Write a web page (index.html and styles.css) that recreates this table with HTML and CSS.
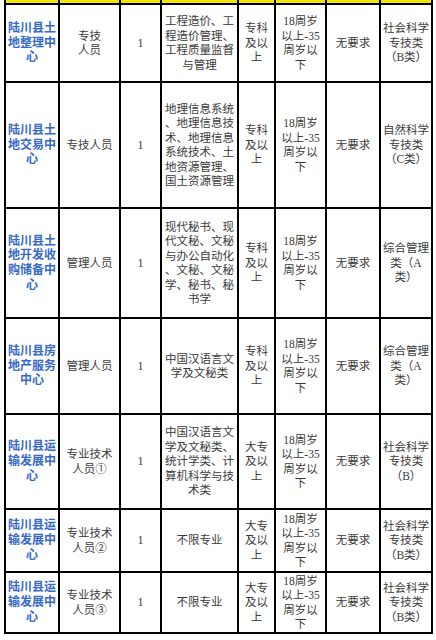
FILE: index.html
```html
<!DOCTYPE html>
<html lang="zh">
<head>
<meta charset="utf-8">
<link rel="stylesheet" href="styles.css">
</head>
<body>
<table class="jobs">
<colgroup>
<col class="c1"><col class="c2"><col class="c3"><col class="c4"><col class="c5"><col class="c6"><col class="c7"><col class="c8">
</colgroup>
<tr class="head"><td></td><td></td><td></td><td></td><td></td><td></td><td></td><td></td></tr>
<tr class="r1">
<td class="unit">陆川县土<br>地整理中<br>心</td>
<td>专技<br>人员</td>
<td class="num">1</td>
<td>工程造价、工<br>程造价管理、<br>工程质量监督<br>与管理</td>
<td>专科<br>及以<br>上</td>
<td class="age">18周岁<br>以上-35<br>周岁以<br>下</td>
<td>无要求</td>
<td>社会科学<br>专技类<br>（B类）</td>
</tr>
<tr class="r2">
<td class="unit">陆川县土<br>地交易中<br>心</td>
<td>专技人员</td>
<td class="num">1</td>
<td>地理信息系统<br>、地理信息技<br>术、地理信息<br>系统技术、土<br>地资源管理、<br>国土资源管理</td>
<td>专科<br>及以<br>上</td>
<td class="age">18周岁<br>以上-35<br>周岁以<br>下</td>
<td>无要求</td>
<td>自然科学<br>专技类<br>（C类）</td>
</tr>
<tr class="r3">
<td class="unit">陆川县土<br>地开发收<br>购储备中<br>心</td>
<td>管理人员</td>
<td class="num">1</td>
<td>现代秘书、现<br>代文秘、文秘<br>与办公自动化<br>、文秘、文秘<br>学、秘书、秘<br>书学</td>
<td>专科<br>及以<br>上</td>
<td class="age">18周岁<br>以上-35<br>周岁以<br>下</td>
<td>无要求</td>
<td>综合管理<br>类（A<br>类）</td>
</tr>
<tr class="r4">
<td class="unit">陆川县房<br>地产服务<br>中心</td>
<td>管理人员</td>
<td class="num">1</td>
<td>中国汉语言文<br>学及文秘类</td>
<td>专科<br>及以<br>上</td>
<td class="age">18周岁<br>以上-35<br>周岁以<br>下</td>
<td>无要求</td>
<td>综合管理<br>类（A<br>类）</td>
</tr>
<tr class="r5">
<td class="unit">陆川县运<br>输发展中<br>心</td>
<td>专业技术<br>人员①</td>
<td class="num">1</td>
<td>中国汉语言文<br>学及文秘类、<br>统计学类、计<br>算机科学与技<br>术类</td>
<td>大专<br>及以<br>上</td>
<td class="age">18周岁<br>以上-35<br>周岁以<br>下</td>
<td>无要求</td>
<td>社会科学<br>专技类<br>（B）</td>
</tr>
<tr class="r6">
<td class="unit">陆川县运<br>输发展中<br>心</td>
<td>专业技术<br>人员②</td>
<td class="num">1</td>
<td>不限专业</td>
<td>大专<br>及以<br>上</td>
<td class="age">18周岁<br>以上-35<br>周岁以<br>下</td>
<td>无要求</td>
<td>社会科学<br>专技类<br>（B类）</td>
</tr>
<tr class="r7">
<td class="unit">陆川县运<br>输发展中<br>心</td>
<td>专业技术<br>人员③</td>
<td class="num">1</td>
<td>不限专业</td>
<td>大专<br>及以<br>上</td>
<td class="age">18周岁<br>以上-35<br>周岁以<br>下</td>
<td>无要求</td>
<td>社会科学<br>专技类<br>（B类）</td>
</tr>
</table>
</body>
</html>
```
FILE: styles.css
```css
html, body {
  margin: 0;
  padding: 0;
  background: #ffffff;
}
body {
  font-family: "Liberation Serif", "Noto Sans CJK SC", serif;
  color: #3a3a3a;
}
.jobs {
  margin-left: 4px;
  width: 427px;
  border-collapse: collapse;
  table-layout: fixed;
  border-top: none;
}
.c1 { width: 54px; }
.c2 { width: 61px; }
.c3 { width: 41px; }
.c4 { width: 77px; }
.c5 { width: 37px; }
.c6 { width: 51px; }
.c7 { width: 54px; }
.c8 { width: 52px; }
.jobs td {
  border: 2px solid #000;
  padding: 0 1px;
  text-align: center;
  vertical-align: middle;
  font-size: 11.5px;
  line-height: 14.5px;
  overflow: hidden;
  white-space: nowrap;
}
.jobs .head td {
  height: 3px;
  padding: 0;
  background: #f2e600;
  border-top: none;
  line-height: 0;
  font-size: 0;
}
.jobs td.unit {
  font-family: "Liberation Sans", "Noto Sans CJK SC", sans-serif;
  font-weight: bold;
  font-size: 12px;
  line-height: 14.7px;
  color: #3769c9;
}
.jobs td.num {
  font-size: 12px;
}
.r1 { height: 78px; }
.r2 { height: 126px; }
.r3 { height: 110px; }
.r4 { height: 96px; }
.r5 { height: 95px; }
.r6 { height: 63px; }
.r7 { height: 61px; }
```
